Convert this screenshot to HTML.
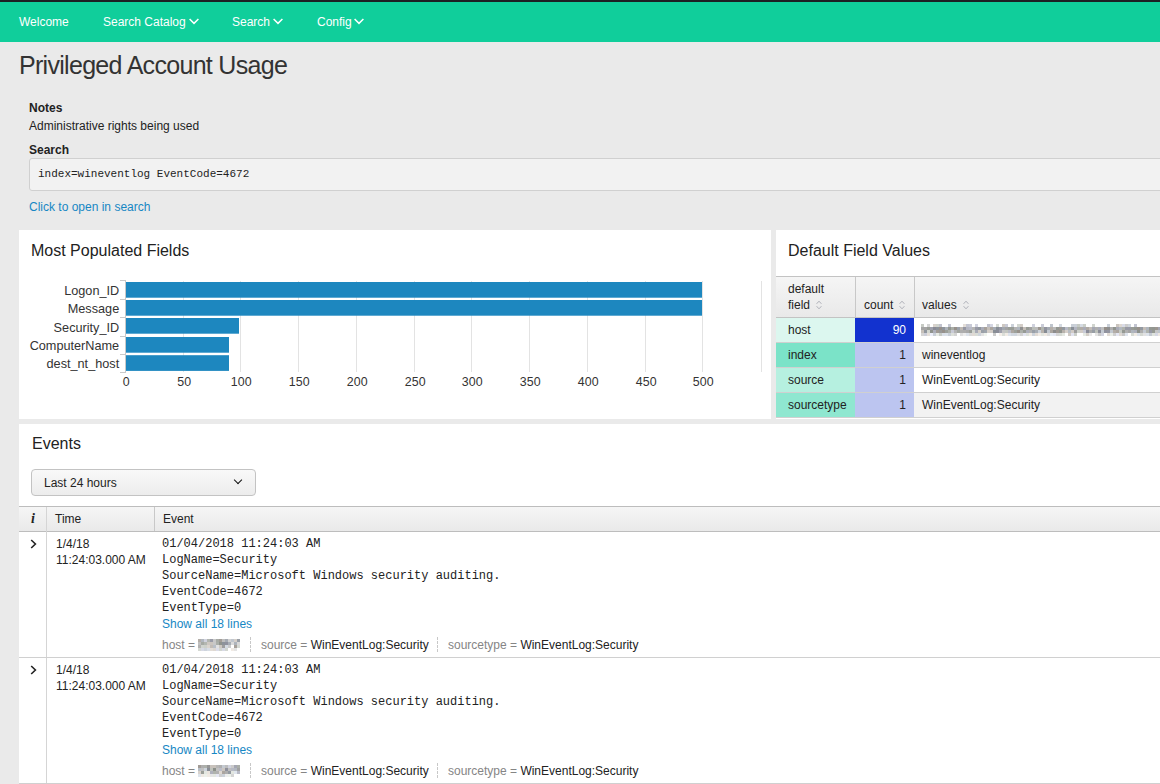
<!DOCTYPE html>
<html><head><meta charset="utf-8">
<style>
*{box-sizing:border-box;margin:0;padding:0}
html,body{width:1160px;height:784px;overflow:hidden;background:#eaeaea;font-family:"Liberation Sans",sans-serif;color:#222;font-size:12px}
.abs{position:absolute}
#topbar{position:absolute;left:0;top:0;width:1160px;height:2px;background:#1d1f24}
#nav{position:absolute;left:0;top:2px;width:1160px;height:40px;background:#10ce9b}
#nav span{position:absolute;top:0;line-height:40px;color:#fff;font-size:12px;white-space:nowrap}
.chev{display:inline-block;position:relative;width:10px;height:7px;margin-left:2.8px;top:-0.8px}
#title{position:absolute;left:19px;top:50px;font-size:25px;letter-spacing:-0.7px;line-height:30px;color:#333;white-space:nowrap}
.lbl{position:absolute;font-weight:bold;font-size:12px;line-height:14px;white-space:nowrap;color:#222}
.txt{position:absolute;font-size:12px;line-height:14px;white-space:nowrap;color:#222}
#sbox{position:absolute;left:29px;top:158px;width:1140px;height:33px;background:#f2f2f2;border:1px solid #d0d0d0;border-radius:3px}
#sbox span{position:absolute;left:8px;top:0;line-height:31px;font-family:"Liberation Mono",monospace;font-size:11px;color:#222}
.link,.cell.link{color:#1787c4}
.panel{position:absolute;background:#fff}
.ptitle{position:absolute;font-size:16px;line-height:20px;white-space:nowrap;color:#222}
.mono{font-family:"Liberation Mono",monospace}
#chart{position:absolute;left:0;top:0;pointer-events:none}
#chart text{font-family:"Liberation Sans",sans-serif;fill:#333;font-size:12.7px}
#chart text.ax{font-size:12.4px}
.tbl{position:absolute;border-collapse:collapse}
.hdr{position:absolute;background:linear-gradient(#f5f5f5,#e9e9e9);border-top:1px solid #c3c3c3;border-bottom:1px solid #c3c3c3}
.cell{position:absolute;font-size:12px;line-height:14px;white-space:nowrap;color:#222}
.vline{position:absolute;width:1px;background:#c8c8c8}
.hline{position:absolute;height:1px;background:#d0d0d0}
.sort{display:inline-block;position:relative;width:6px;height:10px;margin-left:6px;top:0.5px;vertical-align:baseline}
.dd{position:absolute;left:31px;top:469px;width:225px;height:27px;border:1px solid #c3c3c3;border-radius:4px;background:linear-gradient(#f9f9f9,#ececec)}
.dd span{position:absolute;left:12px;top:1px;line-height:25px;font-size:12px;color:#222}
.ddchev{position:absolute;left:203px;top:6.6px;width:6px;height:6px;border-right:1.4px solid #111;border-bottom:1.4px solid #111;transform:rotate(45deg)}
.ehdr{position:absolute;left:19px;top:506px;width:1141px;height:26px;background:linear-gradient(#f5f5f5,#e9e9e9);border-top:1px solid #bdbdbd;border-bottom:1px solid #bdbdbd}
.ml{position:absolute;font-family:"Liberation Mono",monospace;font-size:12px;line-height:16px;white-space:pre;color:#222}
.meta{position:absolute;font-size:12px;line-height:14px;white-space:nowrap;color:#858585}
.meta b{font-weight:normal;color:#222}
.dash{position:absolute;width:0;border-left:1px dashed #c8c8c8}
.rchev{position:absolute;width:7px;height:10px}
.pix{position:absolute;background:#c4c3c4;filter:blur(0.5px)}
</style></head><body>
<div id="topbar"></div>
<div id="nav">
<span style="left:19px">Welcome</span>
<span style="left:103px">Search Catalog<svg class="chev" viewBox="0 0 10 7"><polyline points="0.6,1 5,5.4 9.4,1" fill="none" stroke="#fff" stroke-width="1.5"/></svg></span>
<span style="left:232px">Search<svg class="chev" viewBox="0 0 10 7"><polyline points="0.6,1 5,5.4 9.4,1" fill="none" stroke="#fff" stroke-width="1.5"/></svg></span>
<span style="left:317px">Config<svg class="chev" viewBox="0 0 10 7"><polyline points="0.6,1 5,5.4 9.4,1" fill="none" stroke="#fff" stroke-width="1.5"/></svg></span>
</div>
<div id="title">Privileged Account Usage</div>
<div class="lbl" style="left:29px;top:101px">Notes</div>
<div class="txt" style="left:29px;top:119px">Administrative rights being used</div>
<div class="lbl" style="left:29px;top:143px">Search</div>
<div id="sbox"><span>index=wineventlog EventCode=4672</span></div>
<div class="txt link" style="left:29px;top:199.5px">Click to open in search</div>

<div class="panel" style="left:19px;top:230px;width:752px;height:189px">
  <div class="ptitle" style="left:12px;top:10.5px">Most Populated Fields</div>
</div>
<div class="panel" style="left:776px;top:230px;width:384px;height:189px">
  <div class="ptitle" style="left:12px;top:10.5px">Default Field Values</div>
</div>
<div class="panel" style="left:19px;top:424px;width:1141px;height:360px">
  <div class="ptitle" style="left:13px;top:10px">Events</div>
</div>


<!-- events -->
<div class="dd"><span>Last 24 hours</span><i class="ddchev"></i></div>
<div class="ehdr"></div>
<div class="vline" style="left:46px;top:507px;height:277px;background:#d5d5d5"></div>
<div class="vline" style="left:154px;top:507px;height:24px"></div>
<div class="cell" style="left:31px;top:512px;font-family:'Liberation Serif',serif;font-style:italic;font-weight:bold;font-size:14px">i</div>
<div class="cell" style="left:55px;top:512px">Time</div>
<div class="cell" style="left:163px;top:512px">Event</div>
<svg class="rchev" style="left:30px;top:539px" viewBox="0 0 7 10"><polyline points="1.2,1 5.4,5 1.2,9" fill="none" stroke="#222" stroke-width="1.6"/></svg>
<div class="cell" style="left:56px;top:536px;line-height:16px">1/4/18<br>11:24:03.000 AM</div>
<div class="ml" style="left:162px;top:536px">01/04/2018 11:24:03 AM
LogName=Security
SourceName=Microsoft Windows security auditing.
EventCode=4672
EventType=0</div>
<div class="cell link" style="left:162px;top:617px">Show all 18 lines</div>
<div class="meta" style="left:162px;top:638px">host = </div>
<div class="dash" style="left:250px;top:637px;height:15px"></div>
<div class="meta" style="left:261px;top:638px">source = <b>WinEventLog:Security</b></div>
<div class="dash" style="left:437px;top:637px;height:15px"></div>
<div class="meta" style="left:448px;top:638px">sourcetype = <b>WinEventLog:Security</b></div>
<div class="hline" style="left:19px;top:657px;width:1141px"></div>
<svg class="rchev" style="left:30px;top:665px" viewBox="0 0 7 10"><polyline points="1.2,1 5.4,5 1.2,9" fill="none" stroke="#222" stroke-width="1.6"/></svg>
<div class="cell" style="left:56px;top:662px;line-height:16px">1/4/18<br>11:24:03.000 AM</div>
<div class="ml" style="left:162px;top:662px">01/04/2018 11:24:03 AM
LogName=Security
SourceName=Microsoft Windows security auditing.
EventCode=4672
EventType=0</div>
<div class="cell link" style="left:162px;top:743px">Show all 18 lines</div>
<div class="meta" style="left:162px;top:764px">host = </div>
<div class="dash" style="left:250px;top:763px;height:15px"></div>
<div class="meta" style="left:261px;top:764px">source = <b>WinEventLog:Security</b></div>
<div class="dash" style="left:437px;top:763px;height:15px"></div>
<div class="meta" style="left:448px;top:764px">sourcetype = <b>WinEventLog:Security</b></div>
<div class="hline" style="left:19px;top:783px;width:1141px"></div>

<!-- default field values table -->
<div class="hdr" style="left:776px;top:276px;width:384px;height:42px"></div>
<div class="vline" style="left:855px;top:277px;height:40px"></div>
<div class="vline" style="left:914px;top:277px;height:40px"></div>
<div class="cell" style="left:788px;top:282px">default</div>
<div class="cell" style="left:788px;top:298px">field<svg class="sort" viewBox="0 0 6 10"><polyline points="0.6,3.8 3,1.2 5.4,3.8" fill="none" stroke="#aeb0b8" stroke-width="1"/><polyline points="0.6,6.2 3,8.8 5.4,6.2" fill="none" stroke="#aeb0b8" stroke-width="1"/></svg></div>
<div class="cell" style="left:864px;top:298px">count<svg class="sort" viewBox="0 0 6 10"><polyline points="0.6,3.8 3,1.2 5.4,3.8" fill="none" stroke="#aeb0b8" stroke-width="1"/><polyline points="0.6,6.2 3,8.8 5.4,6.2" fill="none" stroke="#aeb0b8" stroke-width="1"/></svg></div>
<div class="cell" style="left:922px;top:298px">values<svg class="sort" viewBox="0 0 6 10"><polyline points="0.6,3.8 3,1.2 5.4,3.8" fill="none" stroke="#aeb0b8" stroke-width="1"/><polyline points="0.6,6.2 3,8.8 5.4,6.2" fill="none" stroke="#aeb0b8" stroke-width="1"/></svg></div>
<div class="abs" style="left:776px;top:318px;width:79px;height:24px;background:#dcf7ef"></div>
<div class="abs" style="left:776px;top:343px;width:79px;height:24px;background:#7be3c8"></div>
<div class="abs" style="left:776px;top:368px;width:79px;height:24px;background:#b6f0e0"></div>
<div class="abs" style="left:776px;top:393px;width:79px;height:24px;background:#8fe7d0"></div>
<div class="abs" style="left:855px;top:318px;width:59px;height:24px;background:#1232cf"></div>
<div class="abs" style="left:855px;top:343px;width:59px;height:74px;background:#bcc5f0"></div>
<div class="abs" style="left:914px;top:343px;width:246px;height:24px;background:#f2f2f2"></div>
<div class="abs" style="left:914px;top:393px;width:246px;height:24px;background:#f2f2f2"></div>
<div class="hline" style="left:776px;top:342px;width:384px"></div>
<div class="hline" style="left:776px;top:367px;width:384px"></div>
<div class="hline" style="left:776px;top:392px;width:384px"></div>
<div class="hline" style="left:776px;top:417px;width:384px"></div>
<div class="cell" style="left:788px;top:323px">host</div>
<div class="cell" style="left:788px;top:348px">index</div>
<div class="cell" style="left:788px;top:373px">source</div>
<div class="cell" style="left:788px;top:398px">sourcetype</div>
<div class="cell" style="left:855px;width:51px;text-align:right;top:323px;color:#fff">90</div>
<div class="cell" style="left:855px;width:51px;text-align:right;top:348px">1</div>
<div class="cell" style="left:855px;width:51px;text-align:right;top:373px">1</div>
<div class="cell" style="left:855px;width:51px;text-align:right;top:398px">1</div>
<div class="cell" style="left:922px;top:348px">wineventlog</div>
<div class="cell" style="left:922px;top:373px">WinEventLog:Security</div>
<div class="cell" style="left:922px;top:398px">WinEventLog:Security</div>
<svg id="mos" width="1160" height="784" viewBox="0 0 1160 784" style="position:absolute;left:0;top:0;filter:blur(0.4px)"><rect x="921" y="324" width="3" height="3" fill="#c7cbc5"/><rect x="927" y="324" width="3" height="3" fill="#d4d4d4"/><rect x="933" y="324" width="3" height="3" fill="#d9d3cd"/><rect x="936" y="324" width="3" height="3" fill="#d0d4ce"/><rect x="939" y="324" width="3" height="3" fill="#c1c3cf"/><rect x="948" y="324" width="3" height="3" fill="#c6c8d4"/><rect x="963" y="324" width="3" height="3" fill="#e4ded8"/><rect x="966" y="324" width="3" height="3" fill="#c3c5d1"/><rect x="969" y="324" width="3" height="3" fill="#c8cad6"/><rect x="975" y="324" width="3" height="3" fill="#d1d3df"/><rect x="987" y="324" width="3" height="3" fill="#c0c2ce"/><rect x="990" y="324" width="3" height="3" fill="#d4d6e2"/><rect x="996" y="324" width="3" height="3" fill="#d5d9d3"/><rect x="1002" y="324" width="3" height="3" fill="#cec8c2"/><rect x="1005" y="324" width="3" height="3" fill="#c8cad6"/><rect x="1011" y="324" width="3" height="3" fill="#cbd1d9"/><rect x="1017" y="324" width="3" height="3" fill="#d3d7d1"/><rect x="1020" y="324" width="3" height="3" fill="#d3cdc7"/><rect x="1032" y="324" width="3" height="3" fill="#d0d2de"/><rect x="1041" y="324" width="3" height="3" fill="#caccd8"/><rect x="1050" y="324" width="3" height="3" fill="#bfc5cd"/><rect x="1059" y="324" width="3" height="3" fill="#d3d9e1"/><rect x="1071" y="324" width="3" height="3" fill="#c9cfd7"/><rect x="1074" y="324" width="3" height="3" fill="#cbd1d9"/><rect x="1077" y="324" width="3" height="3" fill="#c6cac4"/><rect x="1080" y="324" width="3" height="3" fill="#d5dbe3"/><rect x="1083" y="324" width="3" height="3" fill="#cacec8"/><rect x="1092" y="324" width="3" height="3" fill="#d1d5cf"/><rect x="1107" y="324" width="3" height="3" fill="#cad0d8"/><rect x="1116" y="324" width="3" height="3" fill="#cbc5bf"/><rect x="1119" y="324" width="3" height="3" fill="#ded8d2"/><rect x="1122" y="324" width="3" height="3" fill="#d9dbe7"/><rect x="1125" y="324" width="3" height="3" fill="#cccccc"/><rect x="1128" y="324" width="3" height="3" fill="#ced4dc"/><rect x="1134" y="324" width="3" height="3" fill="#c3c5d1"/><rect x="921" y="327" width="3" height="3" fill="#a5a5a5"/><rect x="924" y="327" width="3" height="3" fill="#a5a5a5"/><rect x="927" y="327" width="3" height="3" fill="#999d97"/><rect x="930" y="327" width="3" height="3" fill="#9d9fab"/><rect x="933" y="327" width="3" height="3" fill="#888a96"/><rect x="936" y="327" width="3" height="3" fill="#8c929a"/><rect x="939" y="327" width="3" height="3" fill="#96908a"/><rect x="942" y="327" width="3" height="3" fill="#8f959d"/><rect x="945" y="327" width="3" height="3" fill="#acb2ba"/><rect x="948" y="327" width="3" height="3" fill="#939791"/><rect x="951" y="327" width="3" height="3" fill="#a9ada7"/><rect x="954" y="327" width="3" height="3" fill="#97918b"/><rect x="957" y="327" width="3" height="3" fill="#9ba1a9"/><rect x="960" y="327" width="3" height="3" fill="#beb8b2"/><rect x="963" y="327" width="3" height="3" fill="#9597a3"/><rect x="966" y="327" width="3" height="3" fill="#b4b6c2"/><rect x="969" y="327" width="3" height="3" fill="#b8bac6"/><rect x="972" y="327" width="3" height="3" fill="#b5b5b5"/><rect x="975" y="327" width="3" height="3" fill="#989aa6"/><rect x="978" y="327" width="3" height="3" fill="#90969e"/><rect x="981" y="327" width="3" height="3" fill="#aaacb8"/><rect x="984" y="327" width="3" height="3" fill="#a7a19b"/><rect x="987" y="327" width="3" height="3" fill="#c4beb8"/><rect x="990" y="327" width="3" height="3" fill="#aba59f"/><rect x="993" y="327" width="3" height="3" fill="#a5abb3"/><rect x="996" y="327" width="3" height="3" fill="#878d95"/><rect x="999" y="327" width="3" height="3" fill="#9496a2"/><rect x="1002" y="327" width="3" height="3" fill="#a2a8b0"/><rect x="1005" y="327" width="3" height="3" fill="#a3a3a3"/><rect x="1008" y="327" width="3" height="3" fill="#9a9e98"/><rect x="1011" y="327" width="3" height="3" fill="#999d97"/><rect x="1014" y="327" width="3" height="3" fill="#b3b3b3"/><rect x="1017" y="327" width="3" height="3" fill="#afb5bd"/><rect x="1020" y="327" width="3" height="3" fill="#919191"/><rect x="1023" y="327" width="3" height="3" fill="#c4beb8"/><rect x="1026" y="327" width="3" height="3" fill="#979b95"/><rect x="1029" y="327" width="3" height="3" fill="#a1a1a1"/><rect x="1032" y="327" width="3" height="3" fill="#babeb8"/><rect x="1035" y="327" width="3" height="3" fill="#bbbbbb"/><rect x="1038" y="327" width="3" height="3" fill="#9c9690"/><rect x="1041" y="327" width="3" height="3" fill="#b1b5af"/><rect x="1044" y="327" width="3" height="3" fill="#91939f"/><rect x="1047" y="327" width="3" height="3" fill="#a4aab2"/><rect x="1050" y="327" width="3" height="3" fill="#b5afa9"/><rect x="1053" y="327" width="3" height="3" fill="#bababa"/><rect x="1056" y="327" width="3" height="3" fill="#949892"/><rect x="1059" y="327" width="3" height="3" fill="#9e9892"/><rect x="1062" y="327" width="3" height="3" fill="#9399a1"/><rect x="1065" y="327" width="3" height="3" fill="#b8bac6"/><rect x="1068" y="327" width="3" height="3" fill="#aeb2ac"/><rect x="1071" y="327" width="3" height="3" fill="#898f97"/><rect x="1074" y="327" width="3" height="3" fill="#b2b4c0"/><rect x="1077" y="327" width="3" height="3" fill="#adb1ab"/><rect x="1080" y="327" width="3" height="3" fill="#b2aca6"/><rect x="1083" y="327" width="3" height="3" fill="#a9abb7"/><rect x="1086" y="327" width="3" height="3" fill="#aea8a2"/><rect x="1089" y="327" width="3" height="3" fill="#c3bdb7"/><rect x="1092" y="327" width="3" height="3" fill="#a6a8b4"/><rect x="1095" y="327" width="3" height="3" fill="#afafaf"/><rect x="1098" y="327" width="3" height="3" fill="#a9abb7"/><rect x="1101" y="327" width="3" height="3" fill="#bebebe"/><rect x="1104" y="327" width="3" height="3" fill="#958f89"/><rect x="1107" y="327" width="3" height="3" fill="#8e8e8e"/><rect x="1110" y="327" width="3" height="3" fill="#afafaf"/><rect x="1113" y="327" width="3" height="3" fill="#90948e"/><rect x="1116" y="327" width="3" height="3" fill="#a8aab6"/><rect x="1119" y="327" width="3" height="3" fill="#b2b8c0"/><rect x="1122" y="327" width="3" height="3" fill="#aeb2ac"/><rect x="1125" y="327" width="3" height="3" fill="#9799a5"/><rect x="1128" y="327" width="3" height="3" fill="#989aa6"/><rect x="1131" y="327" width="3" height="3" fill="#989c96"/><rect x="1134" y="327" width="3" height="3" fill="#939791"/><rect x="1137" y="327" width="3" height="3" fill="#96908a"/><rect x="1140" y="327" width="3" height="3" fill="#9399a1"/><rect x="1143" y="327" width="3" height="3" fill="#c3bdb7"/><rect x="1146" y="327" width="3" height="3" fill="#afb5bd"/><rect x="1149" y="327" width="3" height="3" fill="#949892"/><rect x="1152" y="327" width="3" height="3" fill="#929690"/><rect x="1155" y="327" width="3" height="3" fill="#9c9690"/><rect x="1158" y="327" width="3" height="3" fill="#a3a5b1"/><rect x="921" y="330" width="3" height="3" fill="#c7c1bb"/><rect x="924" y="330" width="3" height="3" fill="#91979f"/><rect x="927" y="330" width="3" height="3" fill="#d2d6d0"/><rect x="930" y="330" width="3" height="3" fill="#8e928c"/><rect x="933" y="330" width="3" height="3" fill="#adafbb"/><rect x="936" y="330" width="3" height="3" fill="#a09a94"/><rect x="939" y="330" width="3" height="3" fill="#999999"/><rect x="942" y="330" width="3" height="3" fill="#97918b"/><rect x="945" y="330" width="3" height="3" fill="#9ca09a"/><rect x="948" y="330" width="3" height="3" fill="#adb1ab"/><rect x="951" y="330" width="3" height="3" fill="#c9cbd7"/><rect x="954" y="330" width="3" height="3" fill="#b5b5b5"/><rect x="957" y="330" width="3" height="3" fill="#a3a7a1"/><rect x="960" y="330" width="3" height="3" fill="#aeaeae"/><rect x="963" y="330" width="3" height="3" fill="#adadad"/><rect x="966" y="330" width="3" height="3" fill="#a8a8a8"/><rect x="969" y="330" width="3" height="3" fill="#9b9f99"/><rect x="972" y="330" width="3" height="3" fill="#d2d6d0"/><rect x="975" y="330" width="3" height="3" fill="#aaacb8"/><rect x="978" y="330" width="3" height="3" fill="#d5cfc9"/><rect x="981" y="330" width="3" height="3" fill="#9aa0a8"/><rect x="984" y="330" width="3" height="3" fill="#9fa5ad"/><rect x="987" y="330" width="3" height="3" fill="#d5cfc9"/><rect x="990" y="330" width="3" height="3" fill="#d2ccc6"/><rect x="993" y="330" width="3" height="3" fill="#888e96"/><rect x="996" y="330" width="3" height="3" fill="#8a8c98"/><rect x="999" y="330" width="3" height="3" fill="#a0a2ae"/><rect x="1002" y="330" width="3" height="3" fill="#c5c5c5"/><rect x="1005" y="330" width="3" height="3" fill="#c3c7c1"/><rect x="1008" y="330" width="3" height="3" fill="#babcc8"/><rect x="1011" y="330" width="3" height="3" fill="#ada7a1"/><rect x="1014" y="330" width="3" height="3" fill="#9da19b"/><rect x="1017" y="330" width="3" height="3" fill="#98928c"/><rect x="1020" y="330" width="3" height="3" fill="#acb0aa"/><rect x="1023" y="330" width="3" height="3" fill="#969a94"/><rect x="1026" y="330" width="3" height="3" fill="#acaeba"/><rect x="1029" y="330" width="3" height="3" fill="#b1b1b1"/><rect x="1032" y="330" width="3" height="3" fill="#9aa0a8"/><rect x="1035" y="330" width="3" height="3" fill="#a7adb5"/><rect x="1038" y="330" width="3" height="3" fill="#ccd2da"/><rect x="1041" y="330" width="3" height="3" fill="#b9b3ad"/><rect x="1044" y="330" width="3" height="3" fill="#868c94"/><rect x="1047" y="330" width="3" height="3" fill="#c2c8d0"/><rect x="1050" y="330" width="3" height="3" fill="#aba59f"/><rect x="1053" y="330" width="3" height="3" fill="#8c8c8c"/><rect x="1056" y="330" width="3" height="3" fill="#9d9791"/><rect x="1059" y="330" width="3" height="3" fill="#91958f"/><rect x="1062" y="330" width="3" height="3" fill="#b8b2ac"/><rect x="1065" y="330" width="3" height="3" fill="#d5cfc9"/><rect x="1068" y="330" width="3" height="3" fill="#b7bdc5"/><rect x="1071" y="330" width="3" height="3" fill="#d1cbc5"/><rect x="1074" y="330" width="3" height="3" fill="#9e9e9e"/><rect x="1077" y="330" width="3" height="3" fill="#cdd1cb"/><rect x="1080" y="330" width="3" height="3" fill="#d2ccc6"/><rect x="1083" y="330" width="3" height="3" fill="#c8cad6"/><rect x="1086" y="330" width="3" height="3" fill="#8a8c98"/><rect x="1089" y="330" width="3" height="3" fill="#a9a9a9"/><rect x="1092" y="330" width="3" height="3" fill="#979da5"/><rect x="1095" y="330" width="3" height="3" fill="#bcc0ba"/><rect x="1098" y="330" width="3" height="3" fill="#8a8c98"/><rect x="1101" y="330" width="3" height="3" fill="#c4cad2"/><rect x="1104" y="330" width="3" height="3" fill="#90929e"/><rect x="1107" y="330" width="3" height="3" fill="#9395a1"/><rect x="1110" y="330" width="3" height="3" fill="#c2c8d0"/><rect x="1113" y="330" width="3" height="3" fill="#b3ada7"/><rect x="1116" y="330" width="3" height="3" fill="#aca6a0"/><rect x="1119" y="330" width="3" height="3" fill="#c6cac4"/><rect x="1122" y="330" width="3" height="3" fill="#959993"/><rect x="1125" y="330" width="3" height="3" fill="#b0b0b0"/><rect x="1128" y="330" width="3" height="3" fill="#a5a5a5"/><rect x="1131" y="330" width="3" height="3" fill="#b0b6be"/><rect x="1134" y="330" width="3" height="3" fill="#aeb0bc"/><rect x="1137" y="330" width="3" height="3" fill="#8d918b"/><rect x="1140" y="330" width="3" height="3" fill="#aeaeae"/><rect x="1143" y="330" width="3" height="3" fill="#c4cad2"/><rect x="1146" y="330" width="3" height="3" fill="#b0b4ae"/><rect x="1149" y="330" width="3" height="3" fill="#9799a5"/><rect x="1152" y="330" width="3" height="3" fill="#969a94"/><rect x="1155" y="330" width="3" height="3" fill="#c6c6c6"/><rect x="1158" y="330" width="3" height="3" fill="#bfc5cd"/><rect x="921" y="333" width="3" height="3" fill="#d5d5d5"/><rect x="924" y="333" width="3" height="3" fill="#cdcfdb"/><rect x="927" y="333" width="3" height="3" fill="#e5dfd9"/><rect x="930" y="333" width="3" height="3" fill="#eceefa"/><rect x="933" y="333" width="3" height="3" fill="#c9cfd7"/><rect x="936" y="333" width="3" height="3" fill="#e7ebe5"/><rect x="939" y="333" width="3" height="3" fill="#c8ccc6"/><rect x="942" y="333" width="3" height="3" fill="#dbe1e9"/><rect x="945" y="333" width="3" height="3" fill="#dce2ea"/><rect x="948" y="333" width="3" height="3" fill="#c9cfd7"/><rect x="951" y="333" width="3" height="3" fill="#dde1db"/><rect x="954" y="333" width="3" height="3" fill="#d4d4d4"/><rect x="960" y="333" width="3" height="3" fill="#dfdfdf"/><rect x="963" y="333" width="3" height="3" fill="#ededed"/><rect x="966" y="333" width="3" height="3" fill="#dde3eb"/><rect x="969" y="333" width="3" height="3" fill="#d9d9d9"/><rect x="972" y="333" width="3" height="3" fill="#e0dad4"/><rect x="975" y="333" width="3" height="3" fill="#d9ddd7"/><rect x="978" y="333" width="3" height="3" fill="#ced4dc"/><rect x="981" y="333" width="3" height="3" fill="#e3e3e3"/><rect x="984" y="333" width="3" height="3" fill="#f0f4ee"/><rect x="993" y="333" width="3" height="3" fill="#cdcdcd"/><rect x="999" y="333" width="3" height="3" fill="#f5efe9"/><rect x="1002" y="333" width="3" height="3" fill="#daded8"/><rect x="1005" y="333" width="3" height="3" fill="#f1ebe5"/><rect x="1008" y="333" width="3" height="3" fill="#dce2ea"/><rect x="1011" y="333" width="3" height="3" fill="#d2d8e0"/><rect x="1014" y="333" width="3" height="3" fill="#d1d7df"/><rect x="1017" y="333" width="3" height="3" fill="#e1e1e1"/><rect x="1020" y="333" width="3" height="3" fill="#d2d2d2"/><rect x="1023" y="333" width="3" height="3" fill="#e3e5f1"/><rect x="1026" y="333" width="3" height="3" fill="#dde1db"/><rect x="1029" y="333" width="3" height="3" fill="#f1ebe5"/><rect x="1032" y="333" width="3" height="3" fill="#cdd3db"/><rect x="1035" y="333" width="3" height="3" fill="#e2dcd6"/><rect x="1038" y="333" width="3" height="3" fill="#f2ece6"/><rect x="1041" y="333" width="3" height="3" fill="#e2e6e0"/><rect x="1044" y="333" width="3" height="3" fill="#efe9e3"/><rect x="1047" y="333" width="3" height="3" fill="#dddddd"/><rect x="1050" y="333" width="3" height="3" fill="#e6ecf4"/><rect x="1053" y="333" width="3" height="3" fill="#e4e6f2"/><rect x="1056" y="333" width="3" height="3" fill="#d5d5d5"/><rect x="1059" y="333" width="3" height="3" fill="#d7dbd5"/><rect x="1062" y="333" width="3" height="3" fill="#e4e8e2"/><rect x="1068" y="333" width="3" height="3" fill="#cfc9c3"/><rect x="1071" y="333" width="3" height="3" fill="#e2e4f0"/><rect x="1074" y="333" width="3" height="3" fill="#ccd0ca"/><rect x="1083" y="333" width="3" height="3" fill="#e5e9e3"/><rect x="1086" y="333" width="3" height="3" fill="#d4cec8"/><rect x="1089" y="333" width="3" height="3" fill="#e9e9e9"/><rect x="1095" y="333" width="3" height="3" fill="#e5e5e5"/><rect x="1098" y="333" width="3" height="3" fill="#cacaca"/><rect x="1101" y="333" width="3" height="3" fill="#d2d4e0"/><rect x="1107" y="333" width="3" height="3" fill="#e1dbd5"/><rect x="1110" y="333" width="3" height="3" fill="#e9ede7"/><rect x="1113" y="333" width="3" height="3" fill="#cfcfcf"/><rect x="1116" y="333" width="3" height="3" fill="#e5e7f3"/><rect x="1119" y="333" width="3" height="3" fill="#ded8d2"/><rect x="1122" y="333" width="3" height="3" fill="#c8c8c8"/><rect x="1125" y="333" width="3" height="3" fill="#dfe5ed"/><rect x="1131" y="333" width="3" height="3" fill="#d7dbd5"/><rect x="1134" y="333" width="3" height="3" fill="#f1ebe5"/><rect x="1137" y="333" width="3" height="3" fill="#dce2ea"/><rect x="1140" y="333" width="3" height="3" fill="#d4d8d2"/><rect x="1143" y="333" width="3" height="3" fill="#e2e2e2"/><rect x="1146" y="333" width="3" height="3" fill="#dde3eb"/><rect x="1149" y="333" width="3" height="3" fill="#c4cad2"/><rect x="1152" y="333" width="3" height="3" fill="#dfe3dd"/><rect x="1155" y="333" width="3" height="3" fill="#d6d8e4"/><rect x="1158" y="333" width="3" height="3" fill="#ede7e1"/><rect x="198" y="639" width="3" height="3" fill="#b4aea8"/><rect x="201" y="639" width="3" height="3" fill="#b1b7bf"/><rect x="204" y="639" width="3" height="3" fill="#d1d3df"/><rect x="207" y="639" width="3" height="3" fill="#b2b6b0"/><rect x="210" y="639" width="3" height="3" fill="#999ba7"/><rect x="213" y="639" width="3" height="3" fill="#c8c8c8"/><rect x="216" y="639" width="3" height="3" fill="#a8aca6"/><rect x="219" y="639" width="3" height="3" fill="#a39d97"/><rect x="222" y="639" width="3" height="3" fill="#bebebe"/><rect x="225" y="639" width="3" height="3" fill="#a5abb3"/><rect x="228" y="639" width="3" height="3" fill="#d1d1d1"/><rect x="231" y="639" width="3" height="3" fill="#c0c6ce"/><rect x="234" y="639" width="3" height="3" fill="#d4cec8"/><rect x="237" y="639" width="3" height="3" fill="#9aa0a8"/><rect x="198" y="642" width="3" height="3" fill="#c1c1c1"/><rect x="201" y="642" width="3" height="3" fill="#a6aaa4"/><rect x="204" y="642" width="3" height="3" fill="#b3b7b1"/><rect x="207" y="642" width="3" height="3" fill="#cec8c2"/><rect x="210" y="642" width="3" height="3" fill="#cbc5bf"/><rect x="213" y="642" width="3" height="3" fill="#c8c8c8"/><rect x="216" y="642" width="3" height="3" fill="#abafa9"/><rect x="219" y="642" width="3" height="3" fill="#90948e"/><rect x="222" y="642" width="3" height="3" fill="#8d939b"/><rect x="225" y="642" width="3" height="3" fill="#90929e"/><rect x="228" y="642" width="3" height="3" fill="#a8aeb6"/><rect x="231" y="642" width="3" height="3" fill="#dadada"/><rect x="234" y="642" width="3" height="3" fill="#aeb4bc"/><rect x="237" y="642" width="3" height="3" fill="#d8d8d8"/><rect x="198" y="645" width="3" height="3" fill="#b3b3b3"/><rect x="201" y="645" width="3" height="3" fill="#d1d5cf"/><rect x="204" y="645" width="3" height="3" fill="#cdd1cb"/><rect x="207" y="645" width="3" height="3" fill="#dbd5cf"/><rect x="210" y="645" width="3" height="3" fill="#c2bcb6"/><rect x="213" y="645" width="3" height="3" fill="#b9bfc7"/><rect x="216" y="645" width="3" height="3" fill="#e2e2e2"/><rect x="219" y="645" width="3" height="3" fill="#cec8c2"/><rect x="222" y="645" width="3" height="3" fill="#9e9e9e"/><rect x="225" y="645" width="3" height="3" fill="#d5dbe3"/><rect x="228" y="645" width="3" height="3" fill="#cccccc"/><rect x="234" y="645" width="3" height="3" fill="#a6a09a"/><rect x="237" y="645" width="3" height="3" fill="#d5d9d3"/><rect x="198" y="648" width="3" height="3" fill="#d5d9d3"/><rect x="201" y="648" width="3" height="3" fill="#d8dae6"/><rect x="204" y="648" width="3" height="3" fill="#ced4dc"/><rect x="207" y="648" width="3" height="3" fill="#d8dee6"/><rect x="210" y="648" width="3" height="3" fill="#e3ddd7"/><rect x="213" y="648" width="3" height="3" fill="#ded8d2"/><rect x="216" y="648" width="3" height="3" fill="#dbdde9"/><rect x="219" y="648" width="3" height="3" fill="#d1d5cf"/><rect x="222" y="648" width="3" height="3" fill="#d8dae6"/><rect x="225" y="648" width="3" height="3" fill="#d3d7d1"/><rect x="231" y="648" width="3" height="3" fill="#f1ebe5"/><rect x="234" y="648" width="3" height="3" fill="#e4e4e4"/><rect x="198" y="765" width="3" height="3" fill="#a29c96"/><rect x="201" y="765" width="3" height="3" fill="#aeaeae"/><rect x="204" y="765" width="3" height="3" fill="#acb0aa"/><rect x="207" y="765" width="3" height="3" fill="#969696"/><rect x="210" y="765" width="3" height="3" fill="#c8c2bc"/><rect x="213" y="765" width="3" height="3" fill="#c7c1bb"/><rect x="216" y="765" width="3" height="3" fill="#b6b6b6"/><rect x="219" y="765" width="3" height="3" fill="#b0b0b0"/><rect x="222" y="765" width="3" height="3" fill="#c4cad2"/><rect x="225" y="765" width="3" height="3" fill="#bdbdbd"/><rect x="228" y="765" width="3" height="3" fill="#d1d3df"/><rect x="231" y="765" width="3" height="3" fill="#cacaca"/><rect x="234" y="765" width="3" height="3" fill="#a5a7b3"/><rect x="237" y="765" width="3" height="3" fill="#aaaea8"/><rect x="198" y="768" width="3" height="3" fill="#bac0c8"/><rect x="201" y="768" width="3" height="3" fill="#c1c1c1"/><rect x="204" y="768" width="3" height="3" fill="#ced4dc"/><rect x="207" y="768" width="3" height="3" fill="#888e96"/><rect x="210" y="768" width="3" height="3" fill="#bec2bc"/><rect x="213" y="768" width="3" height="3" fill="#8c908a"/><rect x="216" y="768" width="3" height="3" fill="#c2c2c2"/><rect x="219" y="768" width="3" height="3" fill="#bbbdc9"/><rect x="222" y="768" width="3" height="3" fill="#ccc6c0"/><rect x="225" y="768" width="3" height="3" fill="#8e909c"/><rect x="228" y="768" width="3" height="3" fill="#bebebe"/><rect x="231" y="768" width="3" height="3" fill="#b7b9c5"/><rect x="234" y="768" width="3" height="3" fill="#b2b8c0"/><rect x="237" y="768" width="3" height="3" fill="#a1a1a1"/><rect x="198" y="771" width="3" height="3" fill="#dad4ce"/><rect x="201" y="771" width="3" height="3" fill="#9b9f99"/><rect x="204" y="771" width="3" height="3" fill="#e3e7e1"/><rect x="207" y="771" width="3" height="3" fill="#ebe5df"/><rect x="210" y="771" width="3" height="3" fill="#aeb0bc"/><rect x="213" y="771" width="3" height="3" fill="#afb3ad"/><rect x="216" y="771" width="3" height="3" fill="#b1b1b1"/><rect x="219" y="771" width="3" height="3" fill="#ded8d2"/><rect x="222" y="771" width="3" height="3" fill="#aba59f"/><rect x="225" y="771" width="3" height="3" fill="#aeaeae"/><rect x="228" y="771" width="3" height="3" fill="#949aa2"/><rect x="231" y="771" width="3" height="3" fill="#e2e6e0"/><rect x="234" y="771" width="3" height="3" fill="#e0e6ee"/><rect x="237" y="771" width="3" height="3" fill="#b9bbc7"/><rect x="198" y="774" width="3" height="3" fill="#dfe5ed"/><rect x="201" y="774" width="3" height="3" fill="#efe9e3"/><rect x="204" y="774" width="3" height="3" fill="#ecf0ea"/><rect x="207" y="774" width="3" height="3" fill="#f0eae4"/><rect x="210" y="774" width="3" height="3" fill="#e6e6e6"/><rect x="213" y="774" width="3" height="3" fill="#e3e7e1"/><rect x="216" y="774" width="3" height="3" fill="#e5e7f3"/><rect x="219" y="774" width="3" height="3" fill="#cfcfcf"/><rect x="222" y="774" width="3" height="3" fill="#ccd2da"/><rect x="225" y="774" width="3" height="3" fill="#ededed"/><rect x="228" y="774" width="3" height="3" fill="#edf1eb"/><rect x="231" y="774" width="3" height="3" fill="#d5d5d5"/></svg>
<svg id="chart" width="1160" height="784" viewBox="0 0 1160 784">
<rect x="183" y="281" width="1" height="91" fill="#e3e3e3"/>
<rect x="240" y="281" width="1" height="91" fill="#e3e3e3"/>
<rect x="298" y="281" width="1" height="91" fill="#e3e3e3"/>
<rect x="356" y="281" width="1" height="91" fill="#e3e3e3"/>
<rect x="414" y="281" width="1" height="91" fill="#e3e3e3"/>
<rect x="471" y="281" width="1" height="91" fill="#e3e3e3"/>
<rect x="529" y="281" width="1" height="91" fill="#e3e3e3"/>
<rect x="587" y="281" width="1" height="91" fill="#e3e3e3"/>
<rect x="645" y="281" width="1" height="91" fill="#e3e3e3"/>
<rect x="702" y="281" width="1" height="91" fill="#e3e3e3"/>
<rect x="761" y="281" width="1" height="91" fill="#e3e3e3"/>
<rect x="126" y="282" width="576" height="15.7" fill="#1d87bf"/>
<rect x="126" y="300" width="576" height="15.7" fill="#1d87bf"/>
<rect x="126" y="318" width="113" height="15.7" fill="#1d87bf"/>
<rect x="126" y="337" width="103" height="15.7" fill="#1d87bf"/>
<rect x="126" y="355.2" width="103" height="15.7" fill="#1d87bf"/>
<rect x="125" y="280" width="1" height="93" fill="#c9c9c9"/>
<rect x="120" y="280" width="5" height="1" fill="#c9c9c9"/>
<rect x="120" y="299" width="5" height="1" fill="#c9c9c9"/>
<rect x="120" y="317" width="5" height="1" fill="#c9c9c9"/>
<rect x="120" y="336" width="5" height="1" fill="#c9c9c9"/>
<rect x="120" y="354" width="5" height="1" fill="#c9c9c9"/>
<rect x="120" y="372" width="5" height="1" fill="#c9c9c9"/>
<text x="119.2" y="295.00" text-anchor="end" class="cl">Logon_ID</text>
<text x="119.2" y="313.25" text-anchor="end" class="cl">Message</text>
<text x="119.2" y="331.50" text-anchor="end" class="cl">Security_ID</text>
<text x="119.2" y="349.75" text-anchor="end" class="cl">ComputerName</text>
<text x="119.2" y="368.00" text-anchor="end" class="cl">dest_nt_host</text>
<text x="125.5" y="386" text-anchor="middle" class="ax" dx="0.7">0</text>
<text x="183.5" y="386" text-anchor="middle" class="ax" dx="0.7">50</text>
<text x="240.5" y="386" text-anchor="middle" class="ax" dx="0.7">100</text>
<text x="298.5" y="386" text-anchor="middle" class="ax" dx="0.7">150</text>
<text x="356.5" y="386" text-anchor="middle" class="ax" dx="0.7">200</text>
<text x="414.5" y="386" text-anchor="middle" class="ax" dx="0.7">250</text>
<text x="471.5" y="386" text-anchor="middle" class="ax" dx="0.7">300</text>
<text x="529.5" y="386" text-anchor="middle" class="ax" dx="0.7">350</text>
<text x="587.5" y="386" text-anchor="middle" class="ax" dx="0.7">400</text>
<text x="645.5" y="386" text-anchor="middle" class="ax" dx="0.7">450</text>
<text x="702.5" y="386" text-anchor="middle" class="ax" dx="0.7">500</text>
</svg>
</body></html>
